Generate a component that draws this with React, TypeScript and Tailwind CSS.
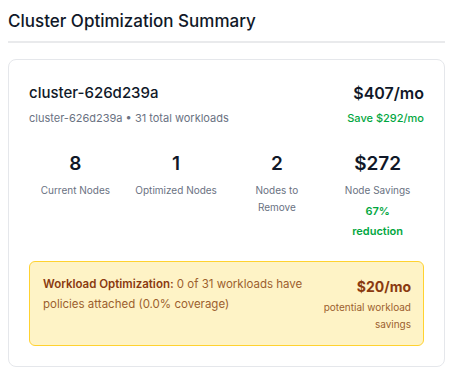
const stats = [
    { value: '8', label: ['Current Nodes'] },
    { value: '1', label: ['Optimized Nodes'] },
    { value: '2', label: ['Nodes to', 'Remove'] },
    { value: '$272', label: ['Node Savings'], extra: ['67%', 'reduction'] },
];

export default function App() {
    return (
        <div className="pl-2 pr-[6px] pt-[9px] font-['Inter',sans-serif] text-gray-900">
            <h2 className="text-[17px] font-medium leading-6">Cluster Optimization Summary</h2>
            <div className="mt-2 h-[2px] bg-[#e9eaec]" />

            <div className="mt-4 rounded-lg border border-gray-200 bg-white p-5">
                <div className="flex items-start justify-between">
                    <div>
                        <div className="mt-[1px] text-[15px] font-medium leading-6">cluster-626d239a</div>
                        <div className="mt-[5px] text-[11px] leading-4 text-gray-500">
                            cluster-626d239a • 31 total workloads
                        </div>
                    </div>
                    <div className="text-right">
                        <div className="mt-[1px] text-base font-semibold leading-6">$407/mo</div>
                        <div className="mt-[5px] text-[11px] font-medium leading-4 text-green-600">Save $292/mo</div>
                    </div>
                </div>

                <div className="mt-6 grid grid-cols-4 gap-2 text-center">
                    {stats.map((s) => (
                        <div key={s.value}>
                            <div className="text-[19px] font-semibold leading-7">{s.value}</div>
                            <div className="mt-1 text-[10px] leading-[17px] text-gray-500">
                                {s.label.map((l) => (
                                    <div key={l}>{l}</div>
                                ))}
                            </div>
                            {s.extra && (
                                <div className="mt-[2px] text-[11px] font-semibold leading-5 text-green-600">
                                    {s.extra.map((l) => (
                                        <div key={l}>{l}</div>
                                    ))}
                                </div>
                            )}
                        </div>
                    ))}
                </div>

                <div className="mt-5 flex items-start justify-between gap-4 rounded-md border border-amber-300 bg-amber-100 py-3 pl-[13px] pr-3">
                    <div className="w-[262px] text-[11.5px] leading-5 text-[#9c5f2e]">
                        <span className="font-semibold text-[#8a3a10]">Workload Optimization:</span> 0 of 31
                        workloads have policies attached (0.0% coverage)
                    </div>
                    <div className="shrink-0 text-right">
                        <div className="pt-[3px] text-sm font-bold leading-5 text-[#8a3a10]">$20/mo</div>
                        <div className="mt-[2px] text-[10px] leading-[17px] text-[#9c5f2e]">
                            <div>potential workload</div>
                            <div>savings</div>
                        </div>
                    </div>
                </div>
            </div>
        </div>
    );
}
